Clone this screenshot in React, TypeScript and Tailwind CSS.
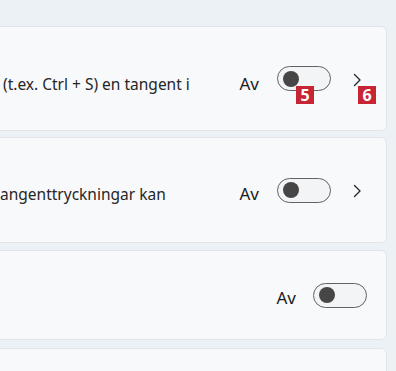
import React from "react";

function Toggle() {
  return (
    <div className="relative w-[54px] h-[25px] rounded-full border-[1.5px] border-[#5f6368] bg-[#f3f4f6] flex items-center">
      <div className="ml-[5px] w-[16px] h-[16px] rounded-full bg-[#464646]" />
    </div>
  );
}

function Chevron() {
  return (
    <svg width="12" height="16" viewBox="0 0 12 16" className="text-[#2a2a2a]">
      <path d="M3.5 2.5 L9 8 L3.5 13.5" fill="none" stroke="currentColor" strokeWidth="1.4" strokeLinecap="round" strokeLinejoin="round" />
    </svg>
  );
}

function Badge({ n }: { n: string }) {
  return (
    <div className="absolute w-[18px] h-[18px] bg-[#c72533] text-white text-[16px] font-bold leading-none flex items-center justify-center" style={{ fontFamily: '"Open Sans", sans-serif' }}>
      {n}
    </div>
  );
}

export default function App() {
  const font = { fontFamily: '"Noto Sans", "Open Sans", sans-serif' };
  return (
    <div className="w-[396px] h-[371px] overflow-hidden bg-[#ecf1f5] relative" style={font}>
      <div className="flex flex-col pt-[26px] pr-[9px] ml-[-20px]">
        {/* Card 1 */}
        <div className="relative h-[105px] rounded-[6px] bg-[#f8f9fb] border border-[#e1e5ea] flex items-center pl-[22px] pr-[23px]">
          <span className="flex-1 text-[15.5px] text-[#262626] mt-[12px] leading-none">(t.ex. Ctrl + S) en tangent i</span>
          <span className="text-[17px] text-[#1b1b1b] mr-[18px] mt-[10px] leading-none">Av</span>
          <Toggle />
          <div className="ml-[20px] mt-[3px]"><Chevron /></div>
          <div className="absolute left-[315px] top-[59px]"><Badge n="5" /></div>
          <div className="absolute left-[377px] top-[59px]"><Badge n="6" /></div>
        </div>
        {/* Card 2 */}
        <div className="mt-[6px] h-[106px] rounded-[6px] bg-[#f8f9fb] border border-[#e1e5ea] flex items-center pl-[19px] pr-[23px]">
          <span className="flex-1 text-[15.5px] text-[#262626] mt-[9px] leading-none">angenttryckningar kan</span>
          <span className="text-[17px] text-[#1b1b1b] mr-[18px] mt-[6px] leading-none">Av</span>
          <Toggle />
          <div className="ml-[20px] mt-[1px]"><Chevron /></div>
        </div>
        {/* Card 3 */}
        <div className="mt-[7px] h-[90px] rounded-[6px] bg-[#f8f9fb] border border-[#e1e5ea] flex items-center pl-[19px] pr-[19px]">
          <span className="flex-1" />
          <span className="text-[17px] text-[#1b1b1b] mr-[17px] mt-[4px] leading-none">Av</span>
          <Toggle />
        </div>
        {/* Card 4 */}
        <div className="mt-[8px] h-[60px] rounded-[6px] bg-[#f8f9fb] border border-[#e1e5ea]" />
      </div>
    </div>
  );
}
